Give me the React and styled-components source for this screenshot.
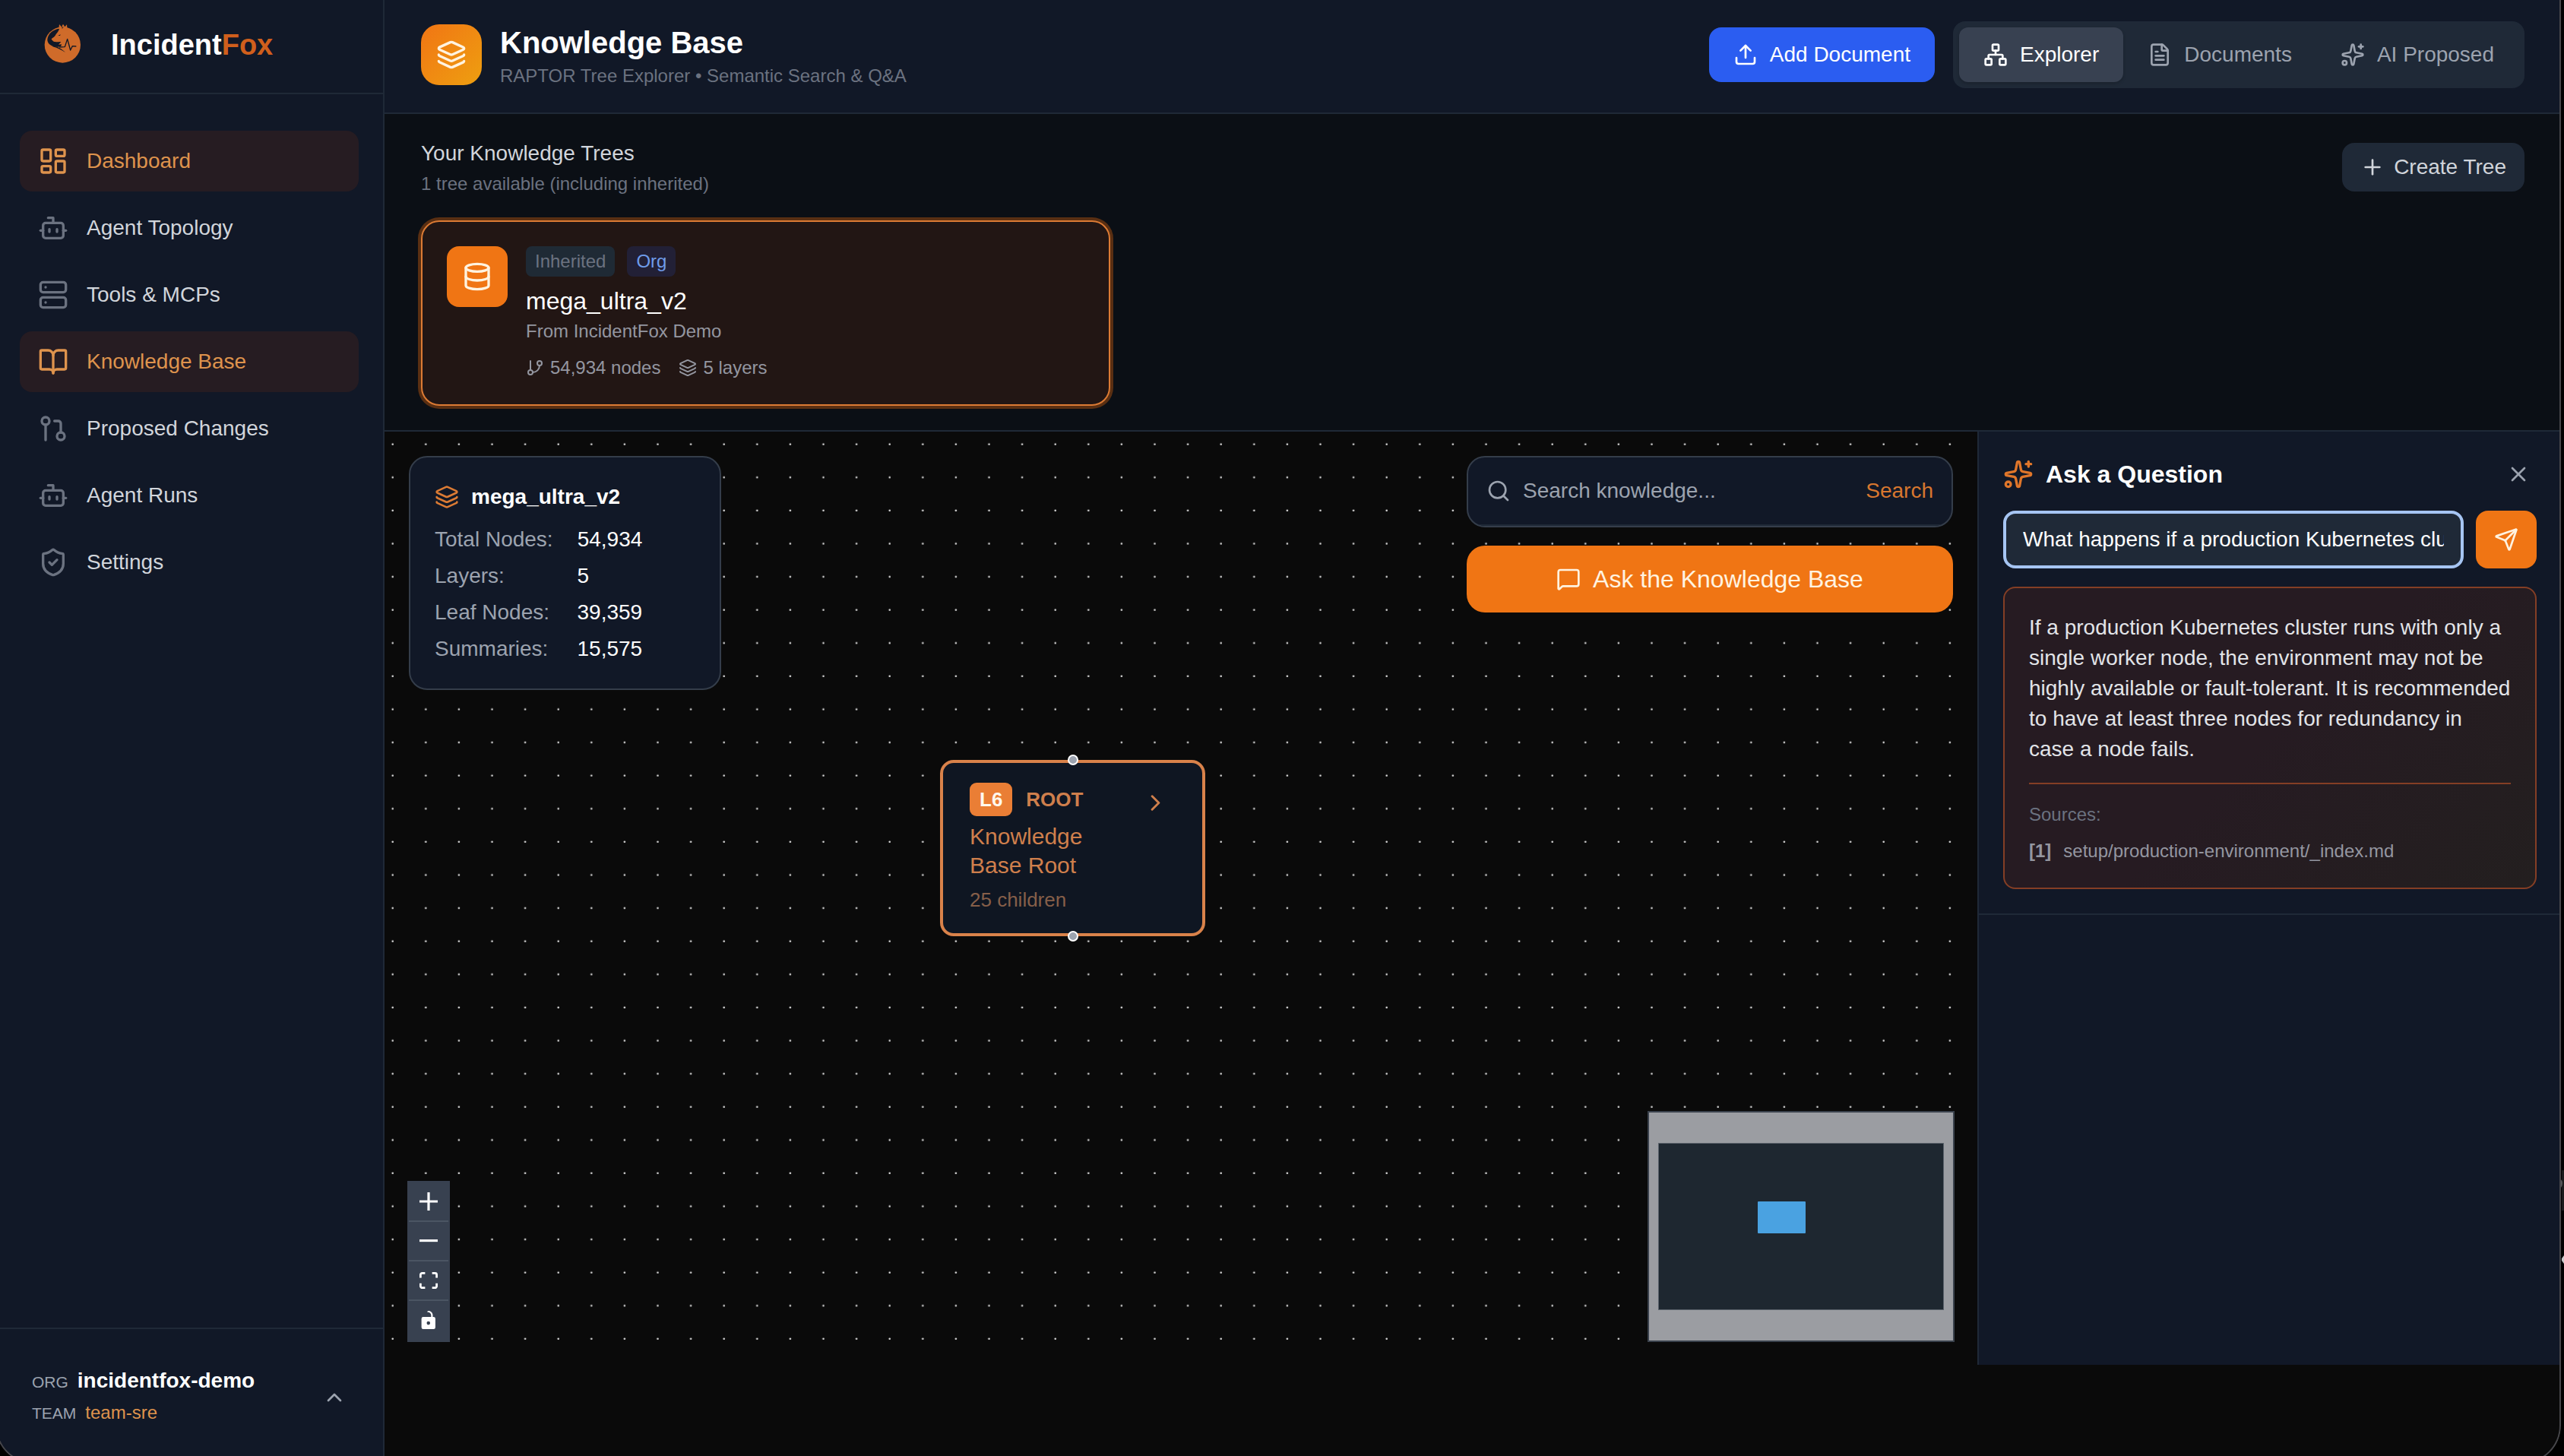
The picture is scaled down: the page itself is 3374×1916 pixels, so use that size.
import styled, { createGlobalStyle } from 'styled-components';
import {
  BookOpen,
  Bot,
  ChevronRight,
  ChevronUp,
  Database,
  FileText,
  GitBranch,
  GitPullRequest,
  Layers,
  LayoutDashboard,
  MessageSquare,
  Network,
  Plus,
  Search,
  Send,
  Server,
  ShieldCheck,
  Sparkles,
  Upload,
  X,
} from 'lucide-react';

const navItems = [
  { label: 'Dashboard', icon: LayoutDashboard, active: true },
  { label: 'Agent Topology', icon: Bot },
  { label: 'Tools & MCPs', icon: Server },
  { label: 'Knowledge Base', icon: BookOpen, active: true },
  { label: 'Proposed Changes', icon: GitPullRequest },
  { label: 'Agent Runs', icon: Bot },
  { label: 'Settings', icon: ShieldCheck },
];

const tabs = [
  { label: 'Explorer', icon: Network, active: true },
  { label: 'Documents', icon: FileText },
  { label: 'AI Proposed', icon: Sparkles },
];

const treeStats = [
  { label: 'Total Nodes:', value: '54,934' },
  { label: 'Layers:', value: '5' },
  { label: 'Leaf Nodes:', value: '39,359' },
  { label: 'Summaries:', value: '15,575' },
];

const controls = [
  {
    label: 'Zoom in',
    viewBox: '0 0 32 32',
    path: 'M32 18.133H18.133V32h-4.266V18.133H0v-4.266h13.867V0h4.266v13.867H32z',
  },
  { label: 'Zoom out', viewBox: '0 0 32 5', path: 'M0 0h32v4.2H0z' },
  {
    label: 'Fit view',
    viewBox: '0 0 32 30',
    path: 'M3.692 4.63c0-.53.4-.938.939-.938h5.215V0H4.708C2.13 0 0 2.054 0 4.63v5.216h3.692V4.631zM27.354 0h-5.2v3.692h5.17c.53 0 .984.4.984.939v5.215H32V4.631A4.624 4.624 0 0027.354 0zm.954 24.83c0 .532-.4.94-.939.94h-5.215v3.768h5.215c2.577 0 4.631-2.13 4.631-4.707v-5.139h-3.692v5.139zm-23.677.94a.919.919 0 01-.939-.94v-5.138H0v5.139c0 2.577 2.13 4.707 4.708 4.707h5.138V25.77H4.631z',
  },
  {
    label: 'Toggle interactivity',
    viewBox: '0 0 25 32',
    path: 'M21.333 10.667H19.81V7.619C19.81 3.429 16.38 0 12.19 0c-4.114 1.828-1.37 2.133.305 2.438 1.676.305 4.42 2.59 4.42 5.181v3.048H3.047A3.056 3.056 0 000 13.714v15.238A3.056 3.056 0 003.048 32h18.285a3.056 3.056 0 003.048-3.048V13.714a3.056 3.056 0 00-3.048-3.047zM12.19 24.533a3.056 3.056 0 01-3.047-3.047 3.056 3.056 0 013.047-3.048 3.056 3.056 0 013.048 3.048 3.056 3.056 0 01-3.048 3.047z',
  },
];

const FoxLogo = () => (
  <svg width="80" height="80" viewBox="126 57 240 240" aria-hidden="true">
    <circle cx="247" cy="177" r="71" fill="#cf6b2a" />
    <path d="M231 122 L234 96 L243 106 L249 95 L256 106 L264 97 L266 120 Z" fill="#cf6b2a" />
    <path
      d="M234 113 C208 116 189 134 187 156 C187 170 198 180 214 184 C224 186 234 185 241 182 L243 175 L231 176 L241 165 C230 164 218 168 210 163 L203 155 C207 148 214 148 219 139 C222 131 231 126 234 113 Z"
      fill="#111827"
    />
    <path d="M229 141 L239 136 L237 141 Z" fill="#111827" />
    <path
      d="M208 180 C226 184 244 192 258 207 C244 198 228 190 208 184 Z"
      fill="#111827"
    />
    <path
      d="M234 186 L256 185 L266 154 L278 198 L286 182 L301 183"
      fill="none"
      stroke="#111827"
      strokeWidth="4"
      strokeLinejoin="round"
    />
    <path d="M244 102 L246 112 L250 106" fill="none" stroke="#111827" strokeWidth="2" />
  </svg>
);

const Sidebar = () => (
  <SidebarWrapper>
    <Brand href="#">
      <FoxLogo />
      <BrandName>
        Incident<BrandAccent>Fox</BrandAccent>
      </BrandName>
    </Brand>
    <Nav>
      {navItems.map(({ label, icon: Icon, active }) => (
        <NavLink key={label} href="#" $active={active}>
          <Icon size={40} />
          {label}
        </NavLink>
      ))}
    </Nav>
    <AccountButton aria-label="Switch organisation or team">
      <AccountLines>
        <AccountLine>
          <AccountKey>ORG</AccountKey>
          <OrgName>incidentfox-demo</OrgName>
        </AccountLine>
        <AccountLine>
          <AccountKey>TEAM</AccountKey>
          <TeamName>team-sre</TeamName>
        </AccountLine>
      </AccountLines>
      <ChevronUp size={32} />
    </AccountButton>
  </SidebarWrapper>
);

const Header = () => (
  <HeaderBar>
    <HeaderIcon>
      <Layers size={40} />
    </HeaderIcon>
    <HeaderText>
      <PageTitle>Knowledge Base</PageTitle>
      <SmallText>RAPTOR Tree Explorer • Semantic Search &amp; Q&amp;A</SmallText>
    </HeaderText>
    <AddButton>
      <Upload size={32} />
      Add Document
    </AddButton>
    <TabGroup>
      {tabs.map(({ label, icon: Icon, active }) => (
        <Tab key={label} $active={active}>
          <Icon size={32} />
          {label}
        </Tab>
      ))}
    </TabGroup>
  </HeaderBar>
);

const Trees = () => (
  <TreesSection>
    <TreesHeading>
      <div>
        <SectionTitle>Your Knowledge Trees</SectionTitle>
        <SmallText>1 tree available (including inherited)</SmallText>
      </div>
      <CreateButton>
        <Plus size={32} />
        Create Tree
      </CreateButton>
    </TreesHeading>
    <TreeGrid>
      <TreeCard>
        <TreeIcon>
          <Database size={40} />
        </TreeIcon>
        <div>
          <Badges>
            <Badge>Inherited</Badge>
            <Badge $org>Org</Badge>
          </Badges>
          <TreeName>mega_ultra_v2</TreeName>
          <TreeOrigin>From IncidentFox Demo</TreeOrigin>
          <TreeMeta>
            <TreeMetaItem>
              <GitBranch size={24} />
              54,934 nodes
            </TreeMetaItem>
            <TreeMetaItem>
              <Layers size={24} />5 layers
            </TreeMetaItem>
          </TreeMeta>
        </div>
      </TreeCard>
    </TreeGrid>
  </TreesSection>
);

const Canvas = () => (
  <CanvasWrapper>
    <DotGrid aria-hidden="true">
      <pattern id="dots" width="43.6" height="43.6" patternUnits="userSpaceOnUse">
        <circle cx="10.7" cy="16.6" r="1.3" fill="#dcdcdc" />
      </pattern>
      <rect width="100%" height="100%" fill="url(#dots)" />
    </DotGrid>

    <RootNode>
      <NodeHandle $side="top" />
      <NodeBody>
        <NodeTop>
          <NodeLevel>L6</NodeLevel>
          ROOT
        </NodeTop>
        <NodeTitle>Knowledge Base Root</NodeTitle>
        <NodeChildren>25 children</NodeChildren>
      </NodeBody>
      <NodeExpand aria-label="Expand node">
        <ChevronRight size={35} />
      </NodeExpand>
      <NodeHandle $side="bottom" />
    </RootNode>

    <StatsPanel>
      <StatsTitle>
        <Layers size={32} />
        <span>mega_ultra_v2</span>
      </StatsTitle>
      <StatsList>
        {treeStats.map(({ label, value }) => (
          <StatsRow key={label}>
            <dt>{label}</dt>
            <dd>{value}</dd>
          </StatsRow>
        ))}
      </StatsList>
    </StatsPanel>

    <SearchPanel>
      <SearchBox>
        <SearchRow>
          <Search size={32} />
          <SearchInput placeholder="Search knowledge..." aria-label="Search knowledge" />
          <SearchButton>Search</SearchButton>
        </SearchRow>
      </SearchBox>
      <AskButton>
        <MessageSquare size={32} />
        Ask the Knowledge Base
      </AskButton>
    </SearchPanel>

    <Controls>
      {controls.map(({ label, viewBox, path }) => (
        <ControlButton key={label} aria-label={label}>
          <svg viewBox={viewBox}>
            <path d={path} />
          </svg>
        </ControlButton>
      ))}
    </Controls>

    <MiniMap viewBox="0 0 400 300" aria-hidden="true">
      <rect width="400" height="300" fill="#9b9da2" />
      <rect x="12.5" y="40.5" width="375" height="219" fill="#1e2730" stroke="#5a626b" />
      <rect x="143" y="117" width="63" height="42" rx="1" fill="#4aa2e1" />
    </MiniMap>
  </CanvasWrapper>
);

const AskPanel = () => (
  <Aside>
    <AskSection>
      <AskHeading>
        <Sparkles size={40} />
        <AskTitle>Ask a Question</AskTitle>
        <CloseButton aria-label="Close">
          <X size={32} />
        </CloseButton>
      </AskHeading>
      <AskForm onSubmit={(event) => event.preventDefault()}>
        <QuestionInput
          aria-label="Question"
          defaultValue="What happens if a production Kubernetes cluster"
        />
        <SendButton aria-label="Send">
          <Send size={32} />
        </SendButton>
      </AskForm>
      <Answer>
        <AnswerText>
          If a production Kubernetes cluster runs with only a single worker
          node, the environment may not be highly available or fault-tolerant.
          It is recommended to have at least three nodes for redundancy in case
          a node fails.
        </AnswerText>
        <Sources>
          <SmallText>Sources:</SmallText>
          <Source>
            <strong>[1]</strong>
            setup/production-environment/_index.md
          </Source>
        </Sources>
      </Answer>
    </AskSection>
  </Aside>
);

const App = () => (
  <>
    <GlobalStyle />
    <Screen>
      <Window>
        <Sidebar />
        <Main>
          <Header />
          <Trees />
          <Explorer>
            <Canvas />
            <AskPanel />
          </Explorer>
        </Main>
      </Window>
      <Behind viewBox="0 0 4 124" aria-hidden="true">
        <path d="M1 0 H4 V53 H1 Z" fill="#1b1c1d" />
        <path d="M0 12 Q4 17 0 23 Z" fill="#58595b" />
        <path d="M4 112 L1 116 V119 L4 123 Z" fill="#c8cacb" />
      </Behind>
    </Screen>
  </>
);

export default App;

const GlobalStyle = createGlobalStyle`
  * {
    box-sizing: border-box;
    margin: 0;
    padding: 0;
  }

  body {
    background: #000;
    color: #fff;
    font-family: 'Liberation Sans', Arial, sans-serif;
    font-size: 28px;
    line-height: 40px;
  }

  a {
    color: inherit;
    text-decoration: none;
  }

  button,
  input {
    border: 0;
    background: none;
    color: inherit;
    font: inherit;
  }

  svg {
    flex-shrink: 0;
  }
`;

/**
 * Clips the browser window, whose edges run past the screen
 */
const Screen = styled.div`
  position: relative;
  height: 100vh;
  overflow: hidden;
`;

const Window = styled.div`
  position: relative;
  display: flex;
  height: calc(100vh + 14px);
  margin: -4px 4px 0 -6px;
  border-radius: 0 0 50px 50px;
  background: #0a0a0a;
  overflow: hidden;

  &::after {
    content: '';
    position: absolute;
    inset: 0;
    border: 2px solid #47474b;
    border-top: 0;
    border-radius: 0 0 50px 50px;
    pointer-events: none;
  }
`;

/**
 * Sliver of the desktop and the pointer beside the window
 */
const Behind = styled.svg`
  position: absolute;
  right: 0;
  bottom: 252px;
  width: 4px;
  height: 124px;
`;

const Main = styled.main`
  flex: 1;
  min-width: 0;
  display: flex;
  flex-direction: column;
  padding-bottom: 130px;
`;

/* Sidebar */

const SidebarWrapper = styled.div`
  flex: 0 0 512px;
  display: flex;
  flex-direction: column;
  border-right: 2px solid #1f2937;
  background: #111827;
`;

const Brand = styled.a`
  display: flex;
  align-items: center;
  gap: 24px;
  height: 128px;
  padding: 0 48px;
  border-bottom: 2px solid #1f2937;
`;

const BrandName = styled.span`
  font-size: 38px;
  font-weight: 700;
`;

const BrandAccent = styled.span`
  color: #d05f1c;
`;

const Nav = styled.nav`
  flex: 1;
  display: flex;
  flex-direction: column;
  gap: 8px;
  padding: 48px 32px;
`;

const NavLink = styled.a`
  display: flex;
  align-items: center;
  gap: 24px;
  padding: 20px 24px;
  border-radius: 16px;
  background: ${({ $active }) => ($active ? '#261c22' : 'transparent')};
  color: ${({ $active }) => ($active ? '#de934d' : '#d1d5db')};

  svg {
    color: ${({ $active }) => ($active ? '#de934d' : '#6b7280')};
  }
`;

const AccountButton = styled.button`
  display: flex;
  align-items: center;
  justify-content: space-between;
  padding: 50px 48px 48px;
  border-top: 2px solid #1f2937;
  color: #9ca3af;
  text-align: left;
`;

const AccountLines = styled.span`
  display: flex;
  flex-direction: column;
  gap: 4px;
`;

const AccountLine = styled.span`
  display: flex;
  align-items: baseline;
  gap: 12px;
  line-height: 36px;
`;

const AccountKey = styled.span`
  font-size: 21px;
`;

const OrgName = styled.strong`
  color: #fff;
`;

const TeamName = styled.span`
  color: #de934d;
  font-size: 24px;
`;

/* Header */

const HeaderBar = styled.header`
  display: flex;
  align-items: center;
  gap: 24px;
  height: 154px;
  padding: 0 48px;
  border-bottom: 2px solid #1f2937;
  background: #111827;
`;

const IconTile = styled.div`
  flex-shrink: 0;
  display: flex;
  align-items: center;
  justify-content: center;
  width: 80px;
  height: 80px;
`;

const HeaderIcon = styled(IconTile)`
  border-radius: 24px;
  background: linear-gradient(135deg, #f17514, #ee9f10);
  color: #fff3e0;
`;

const HeaderText = styled.div`
  flex: 1;
`;

const PageTitle = styled.h1`
  font-size: 40px;
  line-height: 56px;
`;

const SmallText = styled.p`
  color: #6b7280;
  font-size: 24px;
  line-height: 32px;
`;

const AddButton = styled.button`
  display: flex;
  align-items: center;
  gap: 16px;
  padding: 16px 32px;
  border-radius: 16px;
  background: #2b5df1;
`;

const TabGroup = styled.div`
  display: flex;
  padding: 8px;
  border-radius: 16px;
  background: #1f2937;
`;

const Tab = styled.button`
  display: flex;
  align-items: center;
  gap: 16px;
  padding: 16px 32px;
  border-radius: 12px;
  background: ${({ $active }) => ($active ? '#384151' : 'transparent')};
  color: ${({ $active }) => ($active ? '#fff' : '#9ca3af')};
  box-shadow: ${({ $active }) => ($active ? '0 2px 4px rgba(0, 0, 0, 0.2)' : 'none')};
`;

/* Knowledge trees */

const TreesSection = styled.section`
  display: flex;
  flex-direction: column;
  gap: 32px;
  padding: 32px 48px;
  border-bottom: 2px solid #1f2937;
  background: #0b0f15;
`;

const TreesHeading = styled.div`
  display: flex;
  align-items: center;
  justify-content: space-between;
`;

const SectionTitle = styled.h2`
  margin-bottom: 4px;
  color: #d1d5db;
  font-size: 28px;
  font-weight: 400;
`;

const CreateButton = styled.button`
  display: flex;
  align-items: center;
  gap: 12px;
  padding: 12px 24px;
  border-radius: 16px;
  background: #1f2937;
  color: #d1d5db;
`;

const TreeGrid = styled.div`
  display: grid;
  grid-template-columns: repeat(3, 1fr);
  gap: 24px;
`;

const TreeCard = styled.article`
  display: flex;
  gap: 24px;
  padding: 32px;
  border: 2px solid #dc7b34;
  border-radius: 24px;
  background: #221614;
  box-shadow: 0 0 0 4px #5a2f12;
`;

const TreeIcon = styled(IconTile)`
  border-radius: 16px;
  background: #f07514;
  color: #fff3e0;
`;

const Badges = styled.div`
  display: flex;
  gap: 16px;
`;

const Badge = styled.span`
  padding: 4px 12px;
  border-radius: 8px;
  background: ${({ $org }) => ($org ? '#222036' : '#1f2a35')};
  color: ${({ $org }) => ($org ? '#6f9cea' : '#6b7280')};
  font-size: 24px;
  line-height: 32px;
`;

const TreeName = styled.h3`
  margin-top: 8px;
  font-size: 32px;
  font-weight: 400;
  line-height: 48px;
`;

const TreeOrigin = styled(SmallText)`
  color: #9496a0;
`;

const TreeMeta = styled.div`
  display: flex;
  gap: 24px;
  margin-top: 16px;
  color: #9496a0;
  font-size: 24px;
  line-height: 32px;
`;

const TreeMetaItem = styled.span`
  display: flex;
  align-items: center;
  gap: 8px;
`;

/* Canvas */

const Explorer = styled.div`
  flex: 1;
  display: flex;
  min-height: 0;
`;

const CanvasWrapper = styled.section`
  position: relative;
  flex: 1;
  min-width: 0;
  overflow: hidden;
`;

const DotGrid = styled.svg`
  display: block;
  width: 100%;
  height: 100%;
`;

const RootNode = styled.div`
  position: absolute;
  top: 432px;
  left: 731px;
  display: flex;
  align-items: flex-start;
  width: 349px;
  padding: 26px 35px;
  border: 4px solid #d9824a;
  border-radius: 18px;
  background: #0f1622;
  color: #cf7f4c;
`;

const NodeBody = styled.div`
  flex: 1;
  display: flex;
  flex-direction: column;
  gap: 8px;
`;

const NodeTop = styled.div`
  display: flex;
  align-items: center;
  gap: 18px;
  font-size: 26px;
  font-weight: 700;
  line-height: 36px;
`;

const NodeLevel = styled.span`
  padding: 4px 13px;
  border-radius: 9px;
  background: #ea7e35;
  color: #fff8ee;
`;

const NodeTitle = styled.h4`
  font-size: 30px;
  font-weight: 400;
  line-height: 38px;
`;

const NodeChildren = styled.p`
  color: #865f49;
  font-size: 26px;
  line-height: 36px;
`;

const NodeExpand = styled.button`
  display: flex;
  padding: 9px;
`;

const NodeHandle = styled.span`
  position: absolute;
  ${({ $side }) => $side}: -11px;
  left: 50%;
  width: 14px;
  height: 14px;
  margin-left: -7px;
  border: 2px solid #fff;
  border-radius: 50%;
  background: #9ca3af;
`;

const StatsPanel = styled.div`
  position: absolute;
  top: 32px;
  left: 32px;
  width: 411px;
  padding: 32px;
  border: 2px solid #343d4a;
  border-radius: 24px;
  background: #111827;
`;

const StatsTitle = styled.h3`
  display: flex;
  align-items: center;
  gap: 16px;
  margin-bottom: 16px;
  font-size: 28px;

  svg {
    color: #dc7b34;
  }
`;

const StatsList = styled.dl`
  display: flex;
  flex-direction: column;
  gap: 8px;
`;

const StatsRow = styled.div`
  display: grid;
  grid-template-columns: 1fr 1fr;
  gap: 32px;
  white-space: nowrap;

  dt {
    color: #9ca3af;
  }
`;

const SearchPanel = styled.div`
  position: absolute;
  top: 32px;
  right: 32px;
  display: flex;
  flex-direction: column;
  gap: 24px;
  width: 640px;
`;

const SearchBox = styled.div`
  border: 2px solid #343d4a;
  border-radius: 24px;
  background: #111827;
  overflow: hidden;
`;

const SearchRow = styled.div`
  display: flex;
  align-items: center;
  gap: 16px;
  padding: 24px;
  border-bottom: 2px solid #1f2937;
  color: #9ca3af;
`;

const SearchInput = styled.input`
  flex: 1;
  min-width: 0;
  height: 40px;
  outline: 0;

  &::placeholder {
    color: #9ca3af;
    opacity: 1;
  }
`;

const SearchButton = styled.button`
  color: #d8772f;
`;

const AskButton = styled.button`
  display: flex;
  align-items: center;
  justify-content: center;
  gap: 16px;
  padding: 20px 32px;
  border-radius: 24px;
  background: #f07514;
  color: #fff3e0;
  font-size: 32px;
  line-height: 48px;
`;

const Controls = styled.div`
  position: absolute;
  bottom: 30px;
  left: 30px;
  display: flex;
  flex-direction: column;
  padding: 2px;
  background: #384150;
`;

const ControlButton = styled.button`
  display: flex;
  align-items: center;
  justify-content: center;
  width: 52px;
  height: 52px;
  border-bottom: 2px solid #4b5563;

  &:last-child {
    border-color: transparent;
  }

  svg {
    width: 24px;
    max-height: 24px;
    fill: #fff;
  }
`;

const MiniMap = styled.svg`
  position: absolute;
  right: 30px;
  bottom: 30px;
  width: 404px;
  height: 304px;
  border: 2px solid #3a424d;
`;

/* Ask panel */

const Aside = styled.aside`
  flex: 0 0 768px;
  border-left: 2px solid #1f2937;
  background: #111827;
`;

const AskSection = styled.section`
  display: flex;
  flex-direction: column;
  gap: 24px;
  padding: 32px;
  border-bottom: 2px solid #1f2937;
`;

const AskHeading = styled.div`
  display: flex;
  align-items: center;
  gap: 16px;
  color: #e0762a;
`;

const AskTitle = styled.h2`
  flex: 1;
  color: #fff;
  font-size: 32px;
  line-height: 48px;
`;

const CloseButton = styled.button`
  display: flex;
  padding: 8px;
  color: #9ca3af;
`;

const AskForm = styled.form`
  display: flex;
  gap: 16px;
`;

const QuestionInput = styled.input`
  flex: 1;
  min-width: 0;
  height: 76px;
  padding: 0 22px;
  border: 4px solid #a6c5f3;
  border-radius: 16px;
  outline: 0;
  background: #1f2937;
`;

const SendButton = styled.button`
  display: flex;
  align-items: center;
  padding: 0 24px;
  border-radius: 16px;
  background: #f07514;
  color: #fff3e0;
`;

const Answer = styled.div`
  padding: 32px;
  border: 2px solid #843e25;
  border-radius: 16px;
  background: linear-gradient(135deg, #261b22 50%, #231f1f);
`;

const AnswerText = styled.p`
  color: #e2e4e8;
`;

const Sources = styled.div`
  display: flex;
  flex-direction: column;
  gap: 16px;
  margin-top: 24px;
  padding-top: 24px;
  border-top: 2px solid #843e25;
`;

const Source = styled(SmallText)`
  display: flex;
  gap: 16px;
  color: #9496a0;
`;
